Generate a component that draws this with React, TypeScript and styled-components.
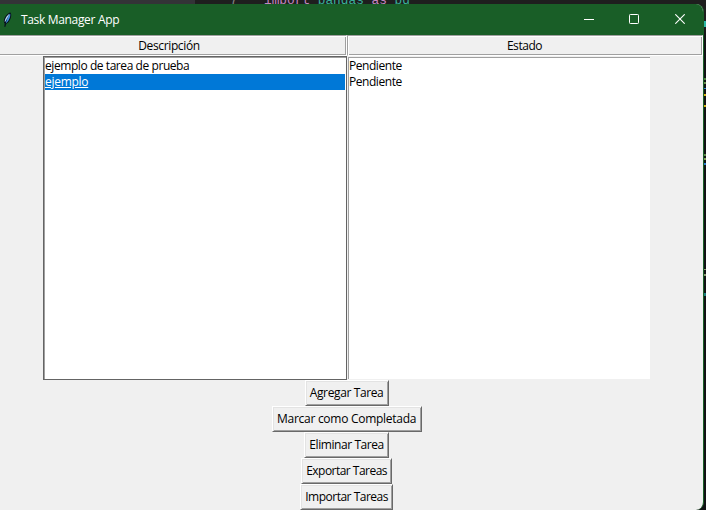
import React from "react";
import styled, { createGlobalStyle, css } from "styled-components";

const Global = createGlobalStyle`
  * { box-sizing: border-box; }
  html, body { margin: 0; padding: 0; overflow: hidden; background: #1e1e1e; }
`;

const Desktop = styled.div`
  position: relative;
  width: 706px;
  height: 510px;
  overflow: hidden;
  display: flex;
  flex-direction: column;
  background: linear-gradient(to bottom, #1e1e1e 0 20px, #111214 45px);
  font-family: "Open Sans", "Noto Sans", sans-serif;
  font-size: 12px;
  color: #000;
`;

const EditorStrip = styled.div`
  height: 4px;
  flex: none;
  display: flex;
  overflow: hidden;
  background: #1e1e1e;
`;

const EditorSidebar = styled.div`
  width: 195px;
  background: #333337;
`;

const CodeLine = styled.div`
  margin: -6px 0 0 35px;
  font: 12.8px/14px "Liberation Mono", monospace;
  white-space: pre;
  color: #c586c0;
`;

const Token = styled.span<{ $color: string }>`
  color: ${(p) => p.$color};
`;

const LineNumber = styled.span`
  display: inline-block;
  width: 34px;
  color: #858585;
`;

const EditorMarks = styled.svg`
  position: absolute;
  left: 704px;
  top: 0;
`;

const Window = styled.div`
  position: relative;
  width: 704px;
  height: 506px;
  display: flex;
  flex-direction: column;
  overflow: hidden;
  background: #f0f0f0;
  border-right: 1px solid #195e27;
  border-radius: 0 8px 8px 0;
`;

const TitleBar = styled.div`
  height: 31px;
  flex: none;
  display: flex;
  align-items: center;
  margin-right: -1px;
  background: #195e27;
  color: #fff;
`;

const Feather = styled.svg`
  flex: none;
  width: 16px;
  height: 16px;
  margin-right: 5px;
`;

const Controls = styled.div`
  margin-left: auto;
  margin-right: 1px;
  display: flex;
`;

const Control = styled.div`
  width: 46px;
  height: 31px;
  padding-bottom: 1px;
  display: grid;
  place-items: center;
`;

const Label = styled.span<{ $spacing?: number }>`
  white-space: nowrap;
  letter-spacing: ${(p) => p.$spacing ?? 0}px;
`;

const HeaderRow = styled.div`
  display: grid;
  grid-template-columns: 350px 356px;
  margin-left: -3px;
  height: 21px;
  flex: none;
`;

const HeaderCell = styled.div<{ $inset?: number }>`
  display: flex;
  align-items: center;
  justify-content: center;
  padding-right: ${(p) => p.$inset ?? 0}px;
  border: 1px solid #a0a0a0;
  border-right-color: #fff;
  border-bottom-color: #fff;
  box-shadow: inset 1px 1px #fff, inset -1px -1px #a0a0a0;
`;

const Lists = styled.div`
  display: flex;
  padding-left: 43px;
  height: 324px;
  flex: none;
`;

const ListBox = styled.div<{ $focused?: boolean }>`
  width: ${(p) => (p.$focused ? 304 : 303)}px;
  height: ${(p) => (p.$focused ? 324 : 323)}px;
  border: 1px solid ${(p) => (p.$focused ? "#646464" : "#f0f0f0")};
  ${(p) => !p.$focused && css`border-right-width: 0; border-bottom-width: 0;`}
  padding: 1px 1px 0;
  background: #fff;
  box-shadow: inset 1px 1px #a0a0a0;
`;

const Row = styled.div<{ $selected?: boolean }>`
  height: 16px;
  line-height: 16px;
  white-space: nowrap;
  background: ${(p) => (p.$selected ? "#0078d7" : "transparent")};
  color: ${(p) => (p.$selected ? "#fff" : "#000")};
  text-decoration: ${(p) => (p.$selected ? "underline" : "none")};
`;

const Buttons = styled.div`
  width: 693.2px;
  display: flex;
  flex-direction: column;
  align-items: center;
`;

const PushButton = styled.button<{ $width: number }>`
  width: ${(p) => p.$width}px;
  height: 26px;
  padding: 0;
  display: flex;
  align-items: center;
  justify-content: center;
  font: inherit;
  line-height: 16px;
  color: #000;
  background: #f0f0f0;
  border: 1px solid #fff;
  border-right-color: #696969;
  border-bottom-color: #696969;
  box-shadow: inset 1px 1px #e3e3e3, inset -1px -1px #a0a0a0;
`;

const tasks = [
  { name: "ejemplo de tarea de prueba", state: "Pendiente", spacing: -0.43 },
  { name: "ejemplo", state: "Pendiente", selected: true, spacing: -0.28 },
];

const actions = [
  { text: "Agregar Tarea", width: 84, spacing: -0.38 },
  { text: "Marcar como Completada", width: 150, spacing: -0.27 },
  { text: "Eliminar Tarea", width: 85, spacing: -0.43 },
  { text: "Exportar Tareas", width: 91, spacing: -0.53 },
  { text: "Importar Tareas", width: 93, spacing: -0.5 },
];

const marks: [number, number, string][] = [
  [21, 6, "#2bb8a5"], [78, 2, "#4a7f3e"], [82, 2, "#6a8f4c"], [88, 1, "#2a7fd0"],
  [94, 2, "#d6b414"], [105, 2, "#d6b414"], [154, 2, "#5c8a47"], [158, 2, "#7f9d55"],
  [163, 2, "#2a7fd0"], [269, 1, "#8a9a70"], [274, 2, "#8a9a70"], [293, 3, "#1b7f80"],
];

export default function App() {
  return (
    <>
      <Global />
      <Desktop>
        <EditorStrip>
          <EditorSidebar />
          <CodeLine>
            <LineNumber>7</LineNumber>
            import <Token $color="#38b09a">pandas</Token> as <Token $color="#38b09a">pd</Token>
          </CodeLine>
        </EditorStrip>
        <EditorMarks width="2" height="510" shapeRendering="crispEdges">
          {marks.map(([y, h, c]) => (
            <rect key={y} x="0" y={y} width="2" height={h} fill={c} />
          ))}
        </EditorMarks>
        <Window>
          <TitleBar>
            <Feather viewBox="0 0 16 16">
              <path d="M10.300 .4c1.500 1 1 4.800-.2 7.200-.9 2-2.200 3.700-3.800 4.100L5.300 15 4.300 14.800 4.700 11.500C2.700 9.800 4.400 5.200 6.400 3 7.600 1.700 9 .7 10.300 .4Z" fill="#07101c" />
              <path d="M10 1.500c.8 1.500 0 4.500-1.300 6.500C7.800 9.600 6.700 10.900 5.800 11.200L6.900 7.500 8.500 4Z" fill="#3f8fe0" />
              <path d="M9.500 1.800C6.700 3.800 4.200 7.600 4.900 10.200L6.700 7.200 8.500 4Z" fill="#b4d8f7" />
            </Feather>
            <Label $spacing={-0.33}>Task Manager App</Label>
            <Controls>
              <Control>
                <svg width="12" height="10"><path d="M2 5.500H12" stroke="#fff" /></svg>
              </Control>
              <Control>
                <svg width="10" height="10"><rect x=".5" y=".5" width="9" height="9" rx=".8" fill="none" stroke="#fff" /></svg>
              </Control>
              <Control>
                <svg width="10" height="10"><path d="M.3.3 9.700 9.700M9.700.3.3 9.700" stroke="#fff" strokeWidth="1.100" /></svg>
              </Control>
            </Controls>
          </TitleBar>
          <HeaderRow>
            <HeaderCell $inset={6}><Label $spacing={-0.36}>Descripción</Label></HeaderCell>
            <HeaderCell $inset={1}><Label $spacing={-0.45}>Estado</Label></HeaderCell>
          </HeaderRow>
          <Lists>
            <ListBox $focused>
              {tasks.map((t) => (
                <Row key={t.name} $selected={t.selected}><Label $spacing={t.spacing}>{t.name}</Label></Row>
              ))}
            </ListBox>
            <ListBox>
              {tasks.map((t) => (
                <Row key={t.name}><Label $spacing={-0.45}>{t.state}</Label></Row>
              ))}
            </ListBox>
          </Lists>
          <Buttons>
            {actions.map((a) => (
              <PushButton key={a.text} $width={a.width}>
                <Label $spacing={a.spacing}>{a.text}</Label>
              </PushButton>
            ))}
          </Buttons>
        </Window>
      </Desktop>
    </>
  );
}
